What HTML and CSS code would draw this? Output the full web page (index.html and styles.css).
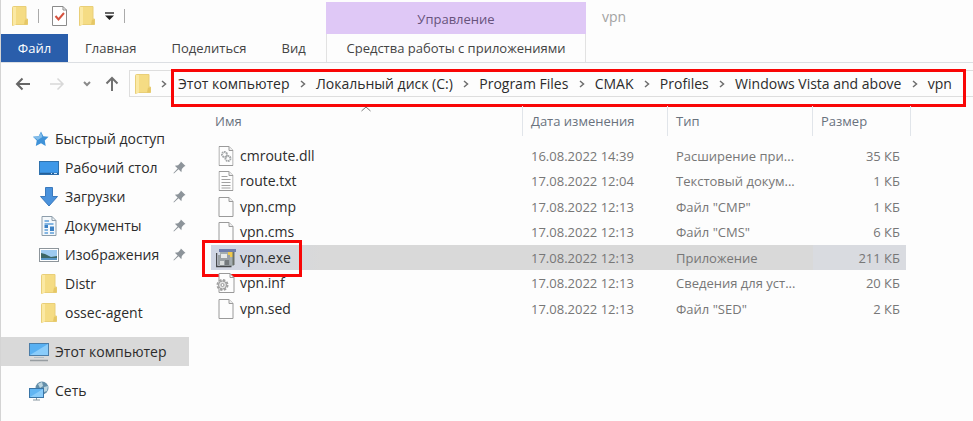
FILE: index.html
```html
<!DOCTYPE html>
<html lang="ru">
<head>
<meta charset="utf-8">
<title>vpn</title>
<link rel="stylesheet" href="styles.css">
</head>
<body>
<svg class="defs" aria-hidden="true">
  <symbol id="folder" viewBox="0 0 16 20">
    <path d="M0.5 1.5Q0.500 0.500 1.500 0.500H14V13H15.500V18.500H3L0.500 19.500Z" fill="#f5dc84" stroke="#e9cf78"/>
    <path d="M1 1H4V18.500L1 19.500Z" fill="#fbe9a4"/>
    <path d="M13 13.500H15.500V18.500H12Z" fill="#e6c766"/>
  </symbol>
  <symbol id="page" viewBox="0 0 15 20">
    <path d="M.5.5H10.500L14.500 4.500V19.500H.5Z" fill="#fdfdfd" stroke="#9a9a9a"/>
    <path d="M10.500.5V4.500H14.500" fill="#eee" stroke="#9a9a9a"/>
  </symbol>
  <symbol id="gears" viewBox="0 0 15 20">
    <use href="#page" width="15" height="20"/>
    <circle cx="6" cy="8.500" r="2.500" fill="none" stroke="#a3a6a8" stroke-width="2" stroke-dasharray="1.600 .6"/>
    <circle cx="9.500" cy="12.500" r="2.500" fill="none" stroke="#a3a6a8" stroke-width="2" stroke-dasharray="1.600 .6"/>
  </symbol>
  <symbol id="text" viewBox="0 0 15 20">
    <use href="#page" width="15" height="20"/>
    <path d="M3 5.500H9M3 8.500H12M3 11.500H12M3 14.500H12M3 17H12" stroke="#a0a0a0"/>
  </symbol>
  <symbol id="pin" viewBox="0 0 14 14">
    <path d="M8.500 0.500L13.500 5.500L12 6L9.500 8.500L9 12L6 9L1 13.500L0.500 13L5 8L2 5L5.500 4.500L8 2Z" fill="#8d949a"/>
  </symbol>
  <symbol id="chev" viewBox="0 0 6 8">
    <path d="M1 1L4.500 4L1 7" fill="none" stroke="#6e6e6e" stroke-width="1.500"/>
  </symbol>
</svg>

<div class="window">
  <header class="titlebar">
    <div class="quick">
      <svg class="folder"><use href="#folder"/></svg>
      <span class="rule"></span>
      <button aria-label="Свойства"><svg class="doc" viewBox="0 0 15 20"><path d="M.5.5H11L14.500 4V19.500H.5Z" fill="#fff" stroke="#8b8b8b"/><path d="M11 .5V4H14.500" fill="none" stroke="#8b8b8b"/><path d="M3.500 10L6.500 13.500L12 7" fill="none" stroke="#d5523f" stroke-width="2"/></svg></button>
      <button aria-label="Новая папка"><svg class="folder"><use href="#folder"/></svg></button>
      <button aria-label="Настройка панели"><svg class="more" viewBox="0 0 9 8"><path d="M0 1H9" stroke="#333" stroke-width="1.500"/><path d="M0 3.500H9L4.500 8Z" fill="#222"/></svg></button>
      <span class="rule"></span>
    </div>
    <div class="context">Управление</div>
    <h1 class="title">vpn</h1>
  </header>

  <nav class="tabs">
    <div class="main-tabs">
      <button class="file">Файл</button>
      <button>Главная</button>
      <button>Поделиться</button>
      <button>Вид</button>
    </div>
    <button class="tools">Средства работы с приложениями</button>
  </nav>

  <div class="address">
    <div class="arrows">
      <button aria-label="Назад"><svg viewBox="0 0 16 14"><path d="M15 7H2M7.500 1.500L2 7L7.500 12.500" fill="none" stroke="#666" stroke-width="2"/></svg></button>
      <button aria-label="Вперёд"><svg viewBox="0 0 16 14"><path d="M1 7H14M8.500 1.500L14 7L8.500 12.500" fill="none" stroke="#d8d8d8" stroke-width="1.500"/></svg></button>
      <button class="small" aria-label="Недавние"><svg viewBox="0 0 8 6"><path d="M1 1L4 4L7 1" fill="none" stroke="#8a8a8a" stroke-width="2"/></svg></button>
      <button class="up" aria-label="Вверх"><svg viewBox="0 0 14 16"><path d="M7 15V2M1.500 7.500L7 2L12.500 7.500" fill="none" stroke="#717171" stroke-width="2"/></svg></button>
    </div>
    <div class="path">
      <svg class="folder"><use href="#folder"/></svg>
      <svg class="chev"><use href="#chev"/></svg>
      <nav class="crumbs">
        <a href="#">Этот компьютер</a><svg class="chev"><use href="#chev"/></svg>
        <a href="#">Локальный диск (C:)</a><svg class="chev"><use href="#chev"/></svg>
        <a href="#">Program Files</a><svg class="chev"><use href="#chev"/></svg>
        <a href="#">CMAK</a><svg class="chev"><use href="#chev"/></svg>
        <a href="#">Profiles</a><svg class="chev"><use href="#chev"/></svg>
        <a href="#">Windows Vista and above</a><svg class="chev"><use href="#chev"/></svg>
        <a href="#">vpn</a>
        <span class="mark path-mark"></span>
      </nav>
    </div>
  </div>

  <div class="body">
    <nav class="side">
      <a class="root" href="#"><svg class="star" viewBox="0 0 17 16"><path d="M8.500 0L11 5L16.500 5.500L12.500 9.500L13.500 15.500L8.500 12.500L3 15.500L4 9.500L0 5.500L6 5Z" fill="#3f92d8"/><path d="M8.500 1L10 6L5 9L0 5.500L6 5Z" fill="#83bdea"/></svg>Быстрый доступ</a>
      <a href="#"><svg class="ico" viewBox="0 0 20 18"><rect x=".5" y="2.500" width="19" height="13" fill="#3e98e8" stroke="#2f72ae"/><path d="M1 14.500H19" stroke="#245f98" stroke-width="1.500"/><path d="M12 14.500H13M15 14.500H18" stroke="#cfe6fa"/></svg>Рабочий стол<svg class="pin"><use href="#pin"/></svg></a>
      <a href="#"><svg class="ico" viewBox="0 0 20 20"><path d="M6.500 .5H13.500V9.500H18.500L10 19L1.500 9.500H6.500Z" fill="#4a92dc" stroke="#3a79bd"/></svg>Загрузки<svg class="pin"><use href="#pin"/></svg></a>
      <a href="#"><svg class="ico" viewBox="0 0 20 20"><path d="M3 .5H13L17 4.500V19.500H3Z" fill="#f4f8fb" stroke="#8d9daa"/><path d="M13 .5V4.500H17" fill="none" stroke="#8d9daa"/><path d="M5.500 5H10M5.500 8H14.500M5.500 14H9M5.500 17H9M11 17H15" stroke="#5e9fda" stroke-width="1.500"/><path d="M5.500 9H9V12H5.500ZM11 10.500H15V15H11Z" fill="#3d82c5"/></svg>Документы<svg class="pin"><use href="#pin"/></svg></a>
      <a href="#"><svg class="ico" viewBox="0 0 20 18"><rect x=".5" y="2.500" width="19" height="13" fill="#fff" stroke="#8d959b"/><rect x="2" y="4" width="16" height="10" fill="#9dcaf0"/><path d="M2 7L6 8L12 11L18 10V14H2Z" fill="#3c6664"/><path d="M2 13H18" stroke="#5795c5" stroke-width="2"/></svg>Изображения<svg class="pin"><use href="#pin"/></svg></a>
      <a href="#"><svg class="ico"><use href="#folder"/></svg>Distr</a>
      <a href="#"><svg class="ico"><use href="#folder"/></svg>ossec-agent</a>
      <a class="root current" href="#"><svg class="ico" viewBox="0 0 20 20"><rect x=".5" y="1.500" width="19" height="12" fill="#58b0f2" stroke="#4b7da8"/><path d="M1 13L19 2V13Z" fill="#8accfa"/><path d="M5 15.500H15" stroke="#b3bec6"/><path d="M1 18.500H19" stroke="#979da1" stroke-width="1.500"/></svg>Этот компьютер</a>
      <a class="root net" href="#"><svg class="ico" viewBox="0 0 20 20"><circle cx="13" cy="7" r="6.500" fill="#648faa"/><path d="M9 3L13 1L14 5L11 7ZM15 6L19 5L18 10L15 11Z" fill="#bcd5df"/><rect x=".5" y="7.500" width="14" height="9" fill="#62b5f2" stroke="#3975a7"/><path d="M1 16L14 8V16Z" fill="#8accfa"/><path d="M7.500 17V19M4 19H11" stroke="#8998a2"/></svg>Сеть</a>
    </nav>

    <main class="list">
      <table>
        <thead>
          <tr><th class="name">Имя<svg class="sort" viewBox="0 0 10 6"><path d="M.5 5L5 1L9.500 5" fill="none" stroke="#777"/></svg></th><th class="date">Дата изменения</th><th class="type">Тип</th><th class="size">Размер</th></tr>
        </thead>
        <tbody>
          <tr><td><svg class="fi"><use href="#gears"/></svg>cmroute.dll</td><td>16.08.2022 14:39</td><td>Расширение при...</td><td>35 КБ</td></tr>
          <tr><td><svg class="fi"><use href="#text"/></svg>route.txt</td><td>17.08.2022 12:04</td><td>Текстовый докум...</td><td>1 КБ</td></tr>
          <tr><td><svg class="fi"><use href="#page"/></svg>vpn.cmp</td><td>17.08.2022 12:13</td><td>Файл "CMP"</td><td>1 КБ</td></tr>
          <tr><td><svg class="fi"><use href="#page"/></svg>vpn.cms</td><td>17.08.2022 12:13</td><td>Файл "CMS"</td><td>6 КБ</td></tr>
          <tr class="selected"><td><svg class="fi" viewBox="0 0 20 20"><path d="M3 1H20V4H3Z" fill="#6f7eac"/><path d="M4 4H18V18H4Z" fill="#a4adb0"/><path d="M12 4H17V9H12Z" fill="#f0c94e"/><path d="M17.500 4V17" stroke="#6b7069" stroke-width="2"/><path d="M.5 5V18.500H15.500" fill="none" stroke="#47494c" stroke-width="1.500"/><path d="M2 7H14V17H2Z" fill="#9ba1a5"/><path d="M5 6H11V10H5Z" fill="#e7e9e9"/><path d="M4 13H8V17H4Z" fill="#d9dcdc"/><path d="M9 12H13V17H9Z" fill="#74797c"/></svg>vpn.exe<span class="mark file-mark"></span></td><td>17.08.2022 12:13</td><td>Приложение</td><td>211 КБ</td></tr>
          <tr><td><svg class="fi" viewBox="0 0 20 20"><path d="M3 .5H14L18 4.500V19.500H3Z" fill="#fdfdfd" stroke="#9a9a9a"/><path d="M14 .5V4.500H18" fill="none" stroke="#9a9a9a"/><circle cx="6.500" cy="12" r="5" fill="#eee" stroke="#a0a0a0" stroke-width="2" stroke-dasharray="2.400 1.500"/><circle cx="6.500" cy="12" r="4" fill="#e4e4e4" stroke="#999"/><circle cx="6.500" cy="12" r="1.500" fill="#fff" stroke="#999"/></svg>vpn.inf</td><td>17.08.2022 12:13</td><td>Сведения для уст...</td><td>20 КБ</td></tr>
          <tr><td><svg class="fi"><use href="#page"/></svg>vpn.sed</td><td>17.08.2022 12:13</td><td>Файл "SED"</td><td>2 КБ</td></tr>
        </tbody>
      </table>
    </main>
  </div>
</div>
</body>
</html>
```
FILE: styles.css
```css
* { box-sizing: border-box; }
body {
  margin: 0;
  background: #fdfdfd;
  color: #2c2c2c;
  font: 13px/18px "Open Sans", "Noto Sans", sans-serif;
}
button { border: 0; padding: 0; background: none; font: inherit; color: inherit; }
a { color: inherit; text-decoration: none; }
svg { display: block; flex: none; }
.defs { position: absolute; width: 0; height: 0; }
.window { min-height: 100vh; border-left: 1px solid #d4d4d4; }

.titlebar { display: flex; height: 34px; }
.quick { display: flex; align-items: center; width: 325px; padding: 0 0 2px 11px; gap: 10px; }
.folder { width: 16px; height: 20px; }
.doc { width: 15px; height: 20px; }
.quick .doc { margin: 0 2px 0 3px; }
.more { width: 9px; height: 8px; }
.rule { width: 1px; height: 14px; background: #aaa; }
.context {
  width: 260px;
  margin-top: 2px;
  background: #dfc8f6;
  color: #67537c;
  line-height: 34px;
  text-align: center;
}
.title { margin: 0 0 0 16px; color: #a3a3a3; font-size: 14px; font-weight: 400; line-height: 34px; }

.tabs { display: flex; height: 29px; border-bottom: 1px solid #dcdfe3; color: #444; }
.main-tabs { display: flex; width: 325px; }
.main-tabs button { padding: 0 18px 0 17px; }
.main-tabs .file { width: 67px; padding: 0; background: #2a5eab; color: #fff; }
.tools { width: 260px; border: solid #e2e2e2; border-width: 0 1px; }

.address { display: flex; padding: 7px 0 0 14px; font-size: 14px; }
.arrows { display: flex; align-items: center; width: 114px; gap: 18px; }
.arrows svg { width: 16px; height: 14px; }
.arrows .small svg { width: 8px; height: 6px; }
.arrows .up { margin-left: -4px; }
.arrows .up svg { width: 14px; height: 16px; }
.path {
  display: flex;
  flex: 1;
  align-items: center;
  height: 27px;
  padding: 0 21px 0 5px;
  border: 1px solid #dedede;
  border-right: 0;
}
.chev { width: 6px; height: 8px; }
.path > .chev { margin: 0 11px 0 10px; }
.crumbs { position: relative; display: flex; flex: 1; align-items: center; justify-content: space-between; }
.mark { position: absolute; border: 3px solid #f90606; pointer-events: none; }
.path-mark { inset: -6px -14px -14px -7px; }

.body { display: flex; }
.side { width: 188px; padding-top: 27px; font-size: 14px; }
.side a { display: flex; align-items: center; height: 29px; padding-left: 38px; gap: 6px; }
.side .root { padding-left: 28px; }
.star { width: 16px; height: 16px; margin-left: 4px; }
.ico { width: 20px; height: 20px; }
.pin { width: 13px; height: 13px; margin: 0 3px 0 auto; }
.side .current { margin: 10px 0; background: #d9d9d9; }

.list { flex: 1; padding: 9px 62px 0 22px; }
table { width: 100%; border-collapse: separate; border-spacing: 0; table-layout: fixed; }
th {
  position: relative;
  height: 30px;
  padding: 0 8px;
  border-right: 1px solid #e1e5ea;
  color: #69727d;
  font-weight: 400;
  text-align: left;
}
th.name { padding-left: 4px; }
.date, .type { width: 145px; }
.size { width: 98px; }
.sort { position: absolute; top: 0; left: calc(50% - 6px); width: 10px; height: 6px; }
tbody::before { content: ""; display: block; height: 7px; }
td { height: 25px; padding: 0 8px; color: #777; white-space: nowrap; }
tr:nth-child(even) td { height: 26px; }
td:first-child {
  position: relative;
  display: flex;
  align-items: center;
  padding-left: 5px;
  gap: 4px;
  color: #2c2c2c;
  font-size: 14px;
}
td:last-child { padding-right: 11px; text-align: right; }
.fi { width: 20px; height: 20px; }
.selected td { background: #d9d9d9; }
.selected td:first-child { background: linear-gradient(90deg, #cfd5e4, #d9d9d9 110px); }
.selected td:last-child { background: linear-gradient(#d9dbe0, #d9dbe0) no-repeat 0 0 / calc(100% - 5px) 100%; }
.file-mark { top: -5px; left: -9px; width: 100px; height: 37px; }
```
